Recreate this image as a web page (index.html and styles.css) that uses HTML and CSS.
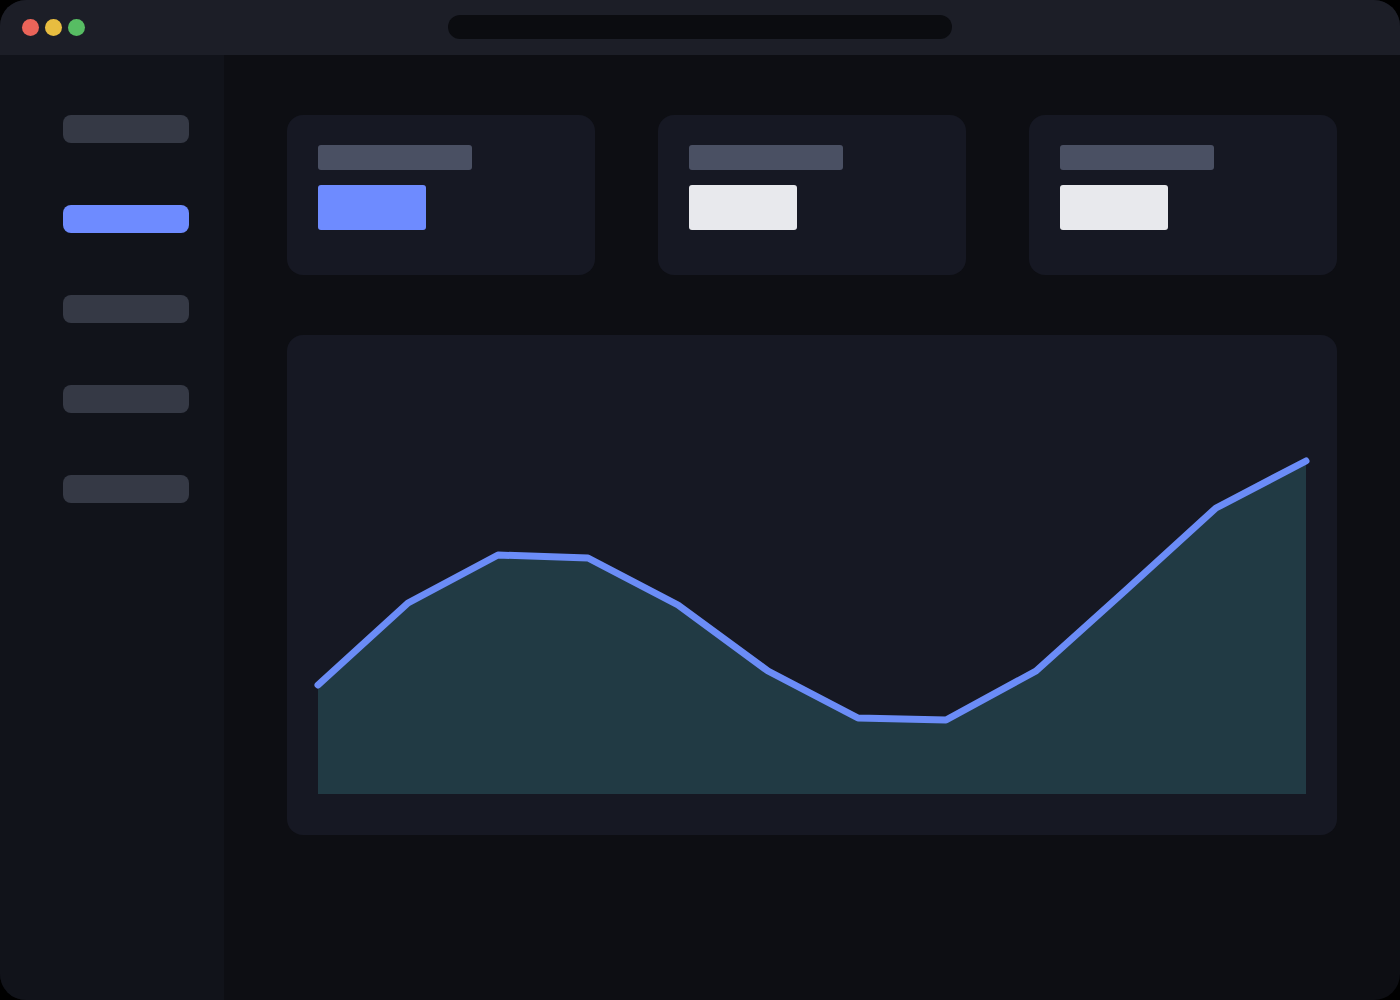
FILE: index.html
```html
<!DOCTYPE html>
<html>
<head>
<meta charset="utf-8">
<link rel="stylesheet" href="styles.css">
</head>
<body>
<div class="window">
  <div class="titlebar">
    <div class="dots">
      <span class="dot red"></span>
      <span class="dot yellow"></span>
      <span class="dot green"></span>
    </div>
    <div class="address"></div>
  </div>
  <div class="body">
    <nav class="sidebar">
      <div class="nav-item"></div>
      <div class="nav-item active"></div>
      <div class="nav-item"></div>
      <div class="nav-item"></div>
      <div class="nav-item"></div>
    </nav>
    <main class="main">
      <div class="cards">
        <div class="card">
          <div class="label"></div>
          <div class="value blue"></div>
        </div>
        <div class="card">
          <div class="label"></div>
          <div class="value light"></div>
        </div>
        <div class="card">
          <div class="label"></div>
          <div class="value light"></div>
        </div>
      </div>
      <div class="chart-card">
        <svg class="chart" width="988" height="428" viewBox="0 0 988 428">
          <polygon class="area" points="0,319 90,237 180,189 270,192 360,239 450,305 540,352 628,354 718,305 808,224 898,142 988,95 988,428 0,428"/>
          <polyline class="line" points="0,319 90,237 180,189 270,192 360,239 450,305 540,352 628,354 718,305 808,224 898,142 988,95"/>
        </svg>
      </div>
    </main>
  </div>
</div>
</body>
</html>
```
FILE: styles.css
```css
html, body {
  margin: 0;
  padding: 0;
  background: #000;
  font-family: "Liberation Sans", sans-serif;
}
.window {
  width: 1400px;
  height: 1000px;
  border-radius: 26px;
  overflow: hidden;
  display: flex;
  flex-direction: column;
  background: #0d0e13;
}
.titlebar {
  height: 55px;
  flex: none;
  background: #1c1e27;
  display: flex;
  align-items: center;
  position: relative;
}
.dots {
  display: flex;
  gap: 6px;
  padding-left: 22px;
}
.dot {
  width: 17px;
  height: 17px;
  border-radius: 50%;
  display: block;
}
.red { background: #ea6459; }
.yellow { background: #e8bd40; }
.green { background: #57bd63; }
.address {
  position: absolute;
  left: 448px;
  top: 15px;
  width: 504px;
  height: 24px;
  border-radius: 12px;
  background: #0b0c10;
}
.body {
  flex: 1;
  display: flex;
}
.sidebar {
  width: 224px;
  flex: none;
  background: #11131a;
  box-sizing: border-box;
  padding: 60px 0 0 63px;
  display: flex;
  flex-direction: column;
  gap: 62px;
}
.nav-item {
  width: 126px;
  height: 28px;
  border-radius: 8px;
  background: #353945;
}
.nav-item.active { background: #6e8bff; }
.main {
  flex: 1;
  box-sizing: border-box;
  padding: 60px 63px 0 63px;
  display: flex;
  flex-direction: column;
  gap: 60px;
}
.cards {
  display: grid;
  grid-template-columns: repeat(3, 308px);
  gap: 63px;
}
.card {
  height: 160px;
  box-sizing: border-box;
  border-radius: 16px;
  background: #161823;
  padding: 30px 31px;
  display: flex;
  flex-direction: column;
  gap: 15px;
}
.label {
  width: 154px;
  height: 25px;
  border-radius: 3px;
  background: #4a5063;
}
.value {
  width: 108px;
  height: 45px;
  border-radius: 3px;
}
.value.blue { background: #6e8bff; }
.value.light { background: #e8e9ed; }
.chart-card {
  height: 500px;
  box-sizing: border-box;
  border-radius: 16px;
  background: #161823;
  padding: 31px 31px 40px 31px;
}
.chart {
  display: block;
  overflow: visible;
}
.area { fill: #213a44; }
.line {
  fill: none;
  stroke: #6b8cf7;
  stroke-width: 7;
  stroke-linejoin: round;
  stroke-linecap: round;
}
```
